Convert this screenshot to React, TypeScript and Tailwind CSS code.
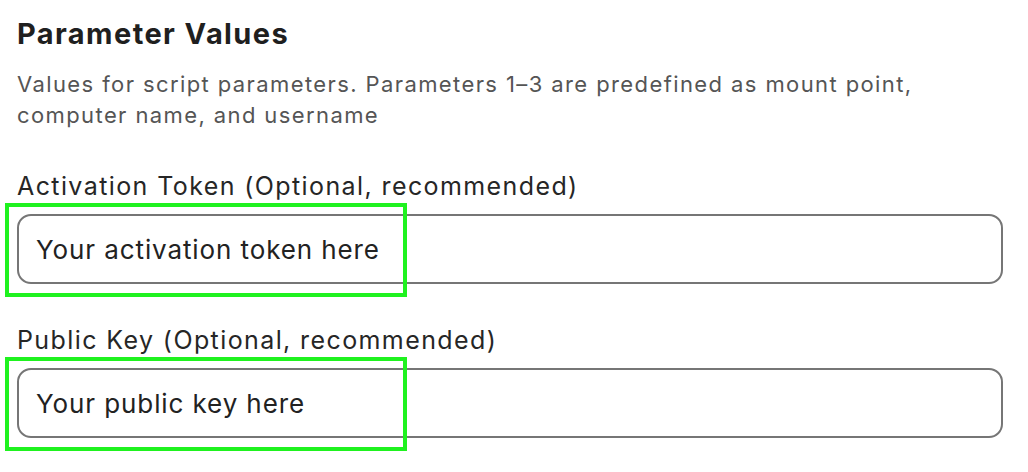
import type { ReactNode } from 'react'

function Field({ label, value }: { label: string; value: string }) {
  return (
    <div className="flex flex-col">
      <label className="text-[25px] leading-[32px] tracking-[1.4px] text-[#262626]">{label}</label>
      <div className="relative mt-[12px]">
        <input
          readOnly
          defaultValue={value}
          className="h-[70px] w-full rounded-[14px] border-2 border-[#767676] bg-white pl-[17px] text-[26px] tracking-[0.9px] text-[#222222] outline-none"
        />
        <Highlight />
      </div>
    </div>
  )
}

function Highlight(): ReactNode {
  return (
    <div className="pointer-events-none absolute -left-[12px] -top-[11px] h-[94px] w-[402px] border-[4px] border-[#1ff21f]" />
  )
}

export default function App() {
  return (
    <div
      className="min-h-screen bg-white px-[17px] pt-[16px]"
      style={{ fontFamily: 'Inter, "Noto Sans", sans-serif' }}
    >
      <div className="w-[986px]">
        <h2 className="text-[29px] font-bold leading-[36px] tracking-[1.4px] text-[#1f1f1f]">Parameter Values</h2>
        <p className="mt-[17px] text-[22px] leading-[31px] tracking-[1.4px] text-[#555555]">
          Values for script parameters. Parameters 1–3 are predefined as mount point, computer name, and username
        </p>
        <div className="mt-[39px] flex flex-col gap-[40px]">
          <Field label="Activation Token (Optional, recommended)" value="Your activation token here" />
          <Field label="Public Key (Optional, recommended)" value="Your public key here" />
        </div>
      </div>
    </div>
  )
}
